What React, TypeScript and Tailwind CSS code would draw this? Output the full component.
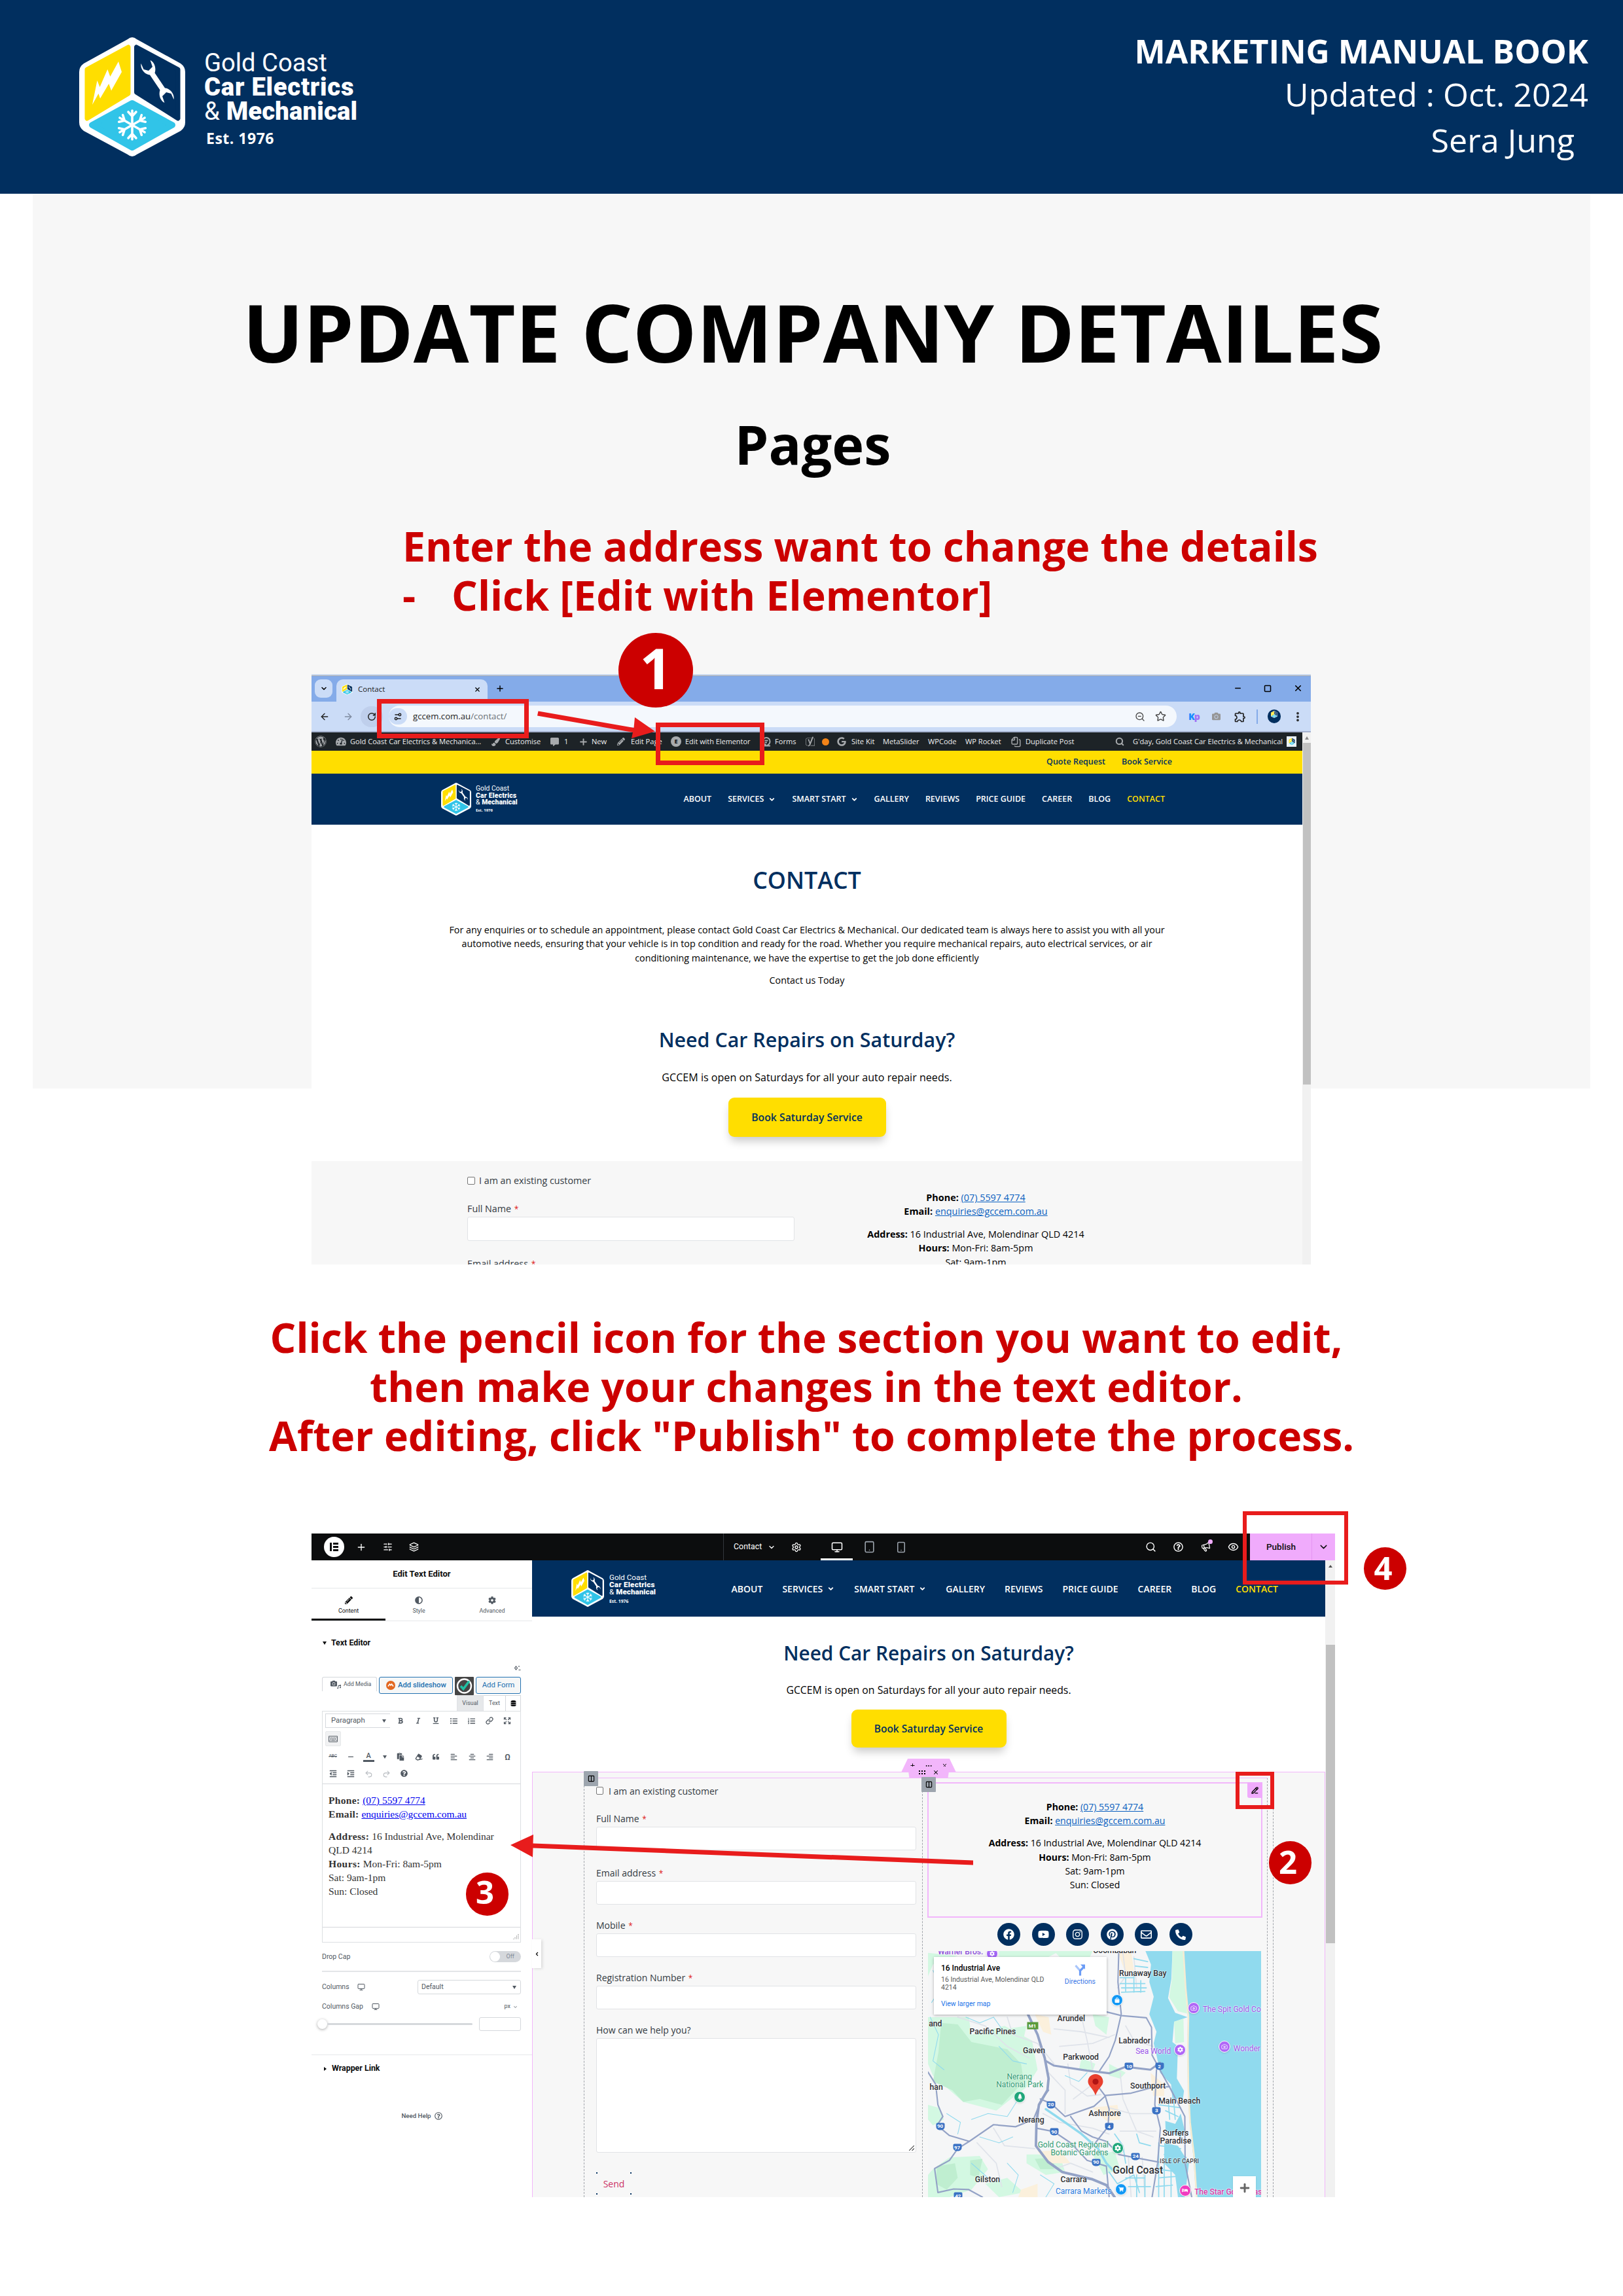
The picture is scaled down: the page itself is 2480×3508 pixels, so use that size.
import type { CSSProperties, ReactNode } from "react";
import {
  ArrowLeft, ArrowRight, Camera, ChevronDown, ChevronLeft, Columns2, Ellipsis, EllipsisVertical, Expand,
  Eye, Files, Layers, Link, Megaphone, Minus, Monitor, PencilLine, Plus, Redo2, RotateCw, Search,
  Settings, Settings2, SlidersHorizontal, Smartphone, Square, Star, Tablet, Undo2, X, ZoomOut,
} from "lucide-react";
import {
  FaAdjust, FaAlignCenter, FaAlignLeft, FaAlignRight, FaBold, FaCamera, FaCog, FaCommentAlt, FaDatabase, FaEraser,
  FaFacebook, FaIndent, FaInstagram, FaItalic, FaListOl, FaListUl, FaMusic, FaOutdent, FaPaintBrush, FaPaste, FaPencilAlt,
  FaPhoneAlt, FaPinterest, FaQuestionCircle, FaQuoteLeft, FaRegEnvelope, FaRegKeyboard, FaRegQuestionCircle,
  FaShoppingCart, FaTachometerAlt, FaTree, FaUnderline, FaWordpress, FaYoast, FaYoutube, FaGoogle, FaBed, FaShoppingBag,
} from "react-icons/fa";
import { MdOutlineExtension } from "react-icons/md";

/* ---------- Brand ---------- */

function BrandMark({ className }: { className: string }) {
  return (
    <svg viewBox="121 57 162 182" preserveAspectRatio="none" className={className}>
      <path
        d="M195 60 Q202 54 209 60 L276 97 Q283 102 283 110 V187 Q283 195 276 200 L209 236 Q202 242 195 236 L128 200 Q121 195 121 187 V110 Q121 102 128 97Z"
        fill="#fff"
      />
      <path d="M196 72 V143 L133 181 V106Z" fill="#ffde00" stroke="#ffde00" strokeWidth="7" strokeLinejoin="round" />
      <path d="M208.500 72 V141 L272 181 V106Z" fill="#012f5f" stroke="#012f5f" strokeWidth="7" strokeLinejoin="round" />
      <path d="M202 157.500 L263.500 191 L202 225.500 L140.500 191Z" fill="#31c4e8" stroke="#31c4e8" strokeWidth="9" strokeLinejoin="round" />
      <path d="M181 94 L186 110 L170 138.500 L166.300 128 L153 150.500 L150.500 143 L141 160 L148.500 123 L152.500 133 L164.300 106 L168.400 117Z" fill="#fff" />
      <path
        d="M215.500 97 L219.500 106 L227 108 L233 102 L229.600 92 C236 95 239 104 236.500 111.500 L252 134.500 C259 135 267 143 265.500 152 L261.500 143 L254 141 L248 147 L251.400 157 C245 154 242 145 244.500 137.500 L229 114.500 C222 114 214 106 215.500 97Z"
        fill="#fff"
      />
      <g stroke="#fff" strokeWidth="3.600" strokeLinecap="round" fill="none">
        {[0, 60, 120, 180, 240, 300].map((a) => (
          <path key={a} d="M0 0 V-22 M-6 -20 L0 -13.500 L6 -20" transform={`translate(202 191) rotate(${a})`} />
        ))}
      </g>
    </svg>
  );
}

type LogoProps = { mark: string; wrap: string; line: string; est: string };

function Logo({ mark, wrap, line, est }: LogoProps) {
  return (
    <div className={`flex ${wrap}`}>
      <BrandMark className={mark} />
      <div className="whitespace-nowrap font-[Roboto,sans-serif] text-white">
        <div className={line}>Gold Coast</div>
        <div className={`${line} font-black tracking-[0.02em]`}>Car Electrics</div>
        <div className={`${line} tracking-[0.005em]`}>
          &amp; <span className="font-black">Mechanical</span>
        </div>
        <div className={`font-['Open_Sans',sans-serif] font-bold ${est}`}>Est. 1976</div>
      </div>
    </div>
  );
}

function Header() {
  return (
    <header className="flex h-[296px] justify-between bg-[#012f5f] text-white">
      <Logo
        wrap="ml-[121px] mt-[57px] gap-[29px]"
        mark="h-[182px] w-[162px]"
        line="h-[37px] translate-y-[21px] text-[38.2px] leading-[37px]"
        est="mt-[27px] pl-[3px] text-[23px] leading-[32px] tracking-[0.5px]"
      />
      <div className="mr-[53px] mt-[45px] text-right text-[50.2px] leading-[66px]">
        <div className="text-[50px] font-bold">MARKETING MANUAL BOOK</div>
        <div>Updated : Oct. 2024</div>
        <div className="mt-1 pr-[21px]">Sera Jung</div>
      </div>
    </header>
  );
}

/* ---------- Shared website parts ---------- */

const NAV = ["ABOUT", "SERVICES", "SMART START", "GALLERY", "REVIEWS", "PRICE GUIDE", "CAREER", "BLOG", "CONTACT"];

function SiteNav({ className }: { className: string }) {
  return (
    <nav className={`flex items-center whitespace-nowrap font-semibold text-white ${className}`}>
      {NAV.map((n) => (
        <span key={n} className={n === "CONTACT" ? "text-[#ffde00]" : "flex items-center gap-[7px]"}>
          {n}
          {(n === "SERVICES" || n === "SMART START") && <ChevronDown size={11} strokeWidth={4} />}
        </span>
      ))}
    </nav>
  );
}

function ContactDetails({ className }: { className: string }) {
  return (
    <div className={`whitespace-nowrap text-center text-black ${className}`}>
      <div><b>Phone:</b> <span className="text-[#0a5fc0] underline">(07) 5597 4774</span></div>
      <div><b>Email:</b> <span className="text-[#0a5fc0] underline">enquiries@gccem.com.au</span></div>
      <div className="mt-[13px]"><b>Address:</b> 16 Industrial Ave, Molendinar QLD 4214</div>
      <div><b>Hours:</b> Mon-Fri: 8am-5pm</div>
      <div>Sat: 9am-1pm</div>
      <div>Sun: Closed</div>
    </div>
  );
}

function Label({ children, required, className }: { children: ReactNode; required?: boolean; className: string }) {
  return (
    <div className={`h-5 leading-5 text-[#333a42] ${className}`}>
      {children} {required && <span className="ml-px text-[0.85em] text-[#d11]">*</span>}
    </div>
  );
}

function NumberDot({ n, className }: { n: number; className: string }) {
  return (
    <div className={`absolute flex justify-center rounded-full bg-[#cc0000] font-bold text-white ${className}`}>{n}</div>
  );
}

/* ---------- First window: browser ---------- */

function BrowserChrome() {
  return (
    <>
      <div className="h-[3px] border-b border-[#a3a8ad] bg-[#cbd9ee]" />
      <div className="flex h-[39px] items-end bg-[#84abe9]">
        <div className="mb-[6px] ml-[5px] flex h-7 w-[27px] items-center justify-center rounded-[9px] bg-[#cbdcf7]">
          <ChevronDown size={12} strokeWidth={3} />
        </div>
        <div className="ml-[6px] flex h-[34px] w-[231px] items-center rounded-t-[10px] bg-[#cbdcf7] pb-1 pl-2">
          <BrandMark className="h-[17px] w-[17px]" />
          <span className="ml-[8px] text-[11.5px] text-[#222]">Contact</span>
          <X size={11} strokeWidth={2.5} className="ml-auto mr-[10px]" />
        </div>
        <Plus size={14} strokeWidth={2.5} className="mb-[13px] ml-[12px]" />
        <div className="mb-[13px] ml-auto mr-[12px] flex items-center gap-[33px] text-black">
          <Minus size={13} strokeWidth={2.5} />
          <Square size={12} strokeWidth={3} />
          <X size={15} strokeWidth={2.5} />
        </div>
      </div>
      <div className="flex h-[47px] items-center border-b-2 border-[#a5b2cf] bg-[#cbdcf7] pl-[12px] text-[#1f1f1f]">
        <ArrowLeft size={16} />
        <ArrowRight size={16} className="ml-[20px] text-[#7e8aa0]" />
        <div className="ml-[11px] flex h-8 w-[34px] items-center justify-center rounded-full bg-[#bfcfec]">
          <RotateCw size={14} strokeWidth={2.5} />
        </div>
        <div className="ml-[9px] flex h-[33px] w-[1204px] items-center rounded-full bg-[#f4f8fd] pr-[16px]">
          <div className="flex h-[25px] w-[28px] items-center justify-center rounded-full bg-[#cbdcf7]">
            <Settings2 size={14} strokeWidth={2.5} className="-scale-y-100" />
          </div>
          <span className="ml-[9px] text-[13.2px]">
            gccem.com.au<span className="text-[#6b7075]">/contact/</span>
          </span>
          <ZoomOut size={16} className="ml-auto text-[#474747]" />
          <Star size={17} className="ml-[15px] text-[#474747]" />
        </div>
        <span className="ml-[18px] w-[36px] text-[14px] font-black tracking-[-1px] text-[#1a8cff]">
          K<span className="text-[#a070f5]">p</span>
        </span>
        <FaCamera size={13} className="text-[#969696]" />
        <MdOutlineExtension size={20} className="ml-[20px]" />
        <span className="ml-[15px] h-[22px] w-[2px] bg-[#84abe9]" />
        <div className="ml-[15px] flex h-[21px] w-[20px] items-start justify-center rounded-full bg-[#012f5f] pt-[2px]">
          <BrandMark className="h-[11px] w-[10px]" />
        </div>
        <EllipsisVertical size={18} strokeWidth={3} className="ml-[17px]" />
      </div>
    </>
  );
}

function AdminBar() {
  const icon = "text-[#a7aaad]";
  return (
    <div className="flex h-[28px] items-center whitespace-nowrap bg-[#1d2327] text-[11.1px] text-[#f0f0f1]">
      <span className="w-[37px] pl-[5px]"><FaWordpress size={18} className={icon} /></span>
      <span className="w-[22px]"><FaTachometerAlt size={16} className={icon} /></span>
      <span className="w-[216px]">Gold Coast Car Electrics &amp; Mechanica...</span>
      <span className="w-[21px]"><FaPaintBrush size={13} className={icon} /></span>
      <span className="w-[69px]">Customise</span>
      <span className="w-[21px]"><FaCommentAlt size={13} className={icon} /></span>
      <span className="w-[22px]">1</span>
      <span className="w-[20px]"><Plus size={15} strokeWidth={3} className={icon} /></span>
      <span className="w-[39px]">New</span>
      <span className="w-[21px]"><FaPencilAlt size={12} className={icon} /></span>
      <span className="w-[61px]">Edit Page</span>
      <span className="w-[22px]">
        <span className="flex h-[16px] w-[16px] items-center justify-center rounded-full bg-[#a7aaad] text-[9px] font-black text-[#1d2327]">E</span>
      </span>
      <span className="w-[117px] text-[10.9px]">Edit with Elementor</span>
      <span className="w-[20px]">
        <svg width="15" height="17" viewBox="0 0 15 17" fill="none" stroke="#a7aaad" strokeWidth="2">
          <path d="M4 14.500 H13 M7 13 A5.500 5.500 0 1 1 12.500 8 C12.500 11 10 13 8 14 M4.500 6.500 H9.500 M4.500 9.500 H8" />
        </svg>
      </span>
      <span className="w-[46px]">Forms</span>
      <span className="w-[26px]"><FaYoast size={16} className={icon} /></span>
      <span className="w-[23px]"><span className="block h-[11px] w-[11px] rounded-full bg-[#f18318]" /></span>
      <span className="w-[22px]"><FaGoogle size={14} className={icon} /></span>
      <span className="w-[48px]">Site Kit</span>
      <span className="w-[69px]">MetaSlider</span>
      <span className="w-[57px]">WPCode</span>
      <span className="w-[69px]">WP Rocket</span>
      <span className="w-[23px]"><Files size={17} className={`-scale-x-100 ${icon}`} /></span>
      <span className="w-[137px]">Duplicate Post</span>
      <span className="w-[27px]"><Search size={14} strokeWidth={3.5} className={icon} /></span>
      <span className="w-[235px]">G'day, Gold Coast Car Electrics &amp; Mechanical</span>
      <span className="flex h-[16px] w-[15px] items-center justify-center bg-[#e9f1f7]">
        <BrandMark className="h-[12px] w-[10px]" />
      </span>
    </div>
  );
}

function BrowserWindow() {
  return (
    <div className="relative ml-[476px] h-[902px] w-[1527px]">
      <div className="flex h-full flex-col overflow-hidden bg-white">
        <BrowserChrome />
        <div className="flex flex-1">
          <div className="w-[1514px]">
            <AdminBar />
            <div className="flex h-[35px] items-center justify-end gap-[25px] bg-[#ffde00] pr-[199px] text-[12.5px] font-semibold text-[#012f5f]">
              <span>Quote Request</span>
              <span>Book Service</span>
            </div>
            <div className="flex h-[78px] items-center justify-between bg-[#012f5f] pl-[198px] pr-[210px]">
              <Logo
                wrap="gap-[7px]"
                mark="h-[50px] w-[46px]"
                line="h-[10.5px] translate-y-[4px] text-[10.4px] leading-[10.5px]"
                est="mt-[6px] text-[6px] leading-[9px]"
              />
              <SiteNav className="gap-[25px] text-[12.5px]" />
            </div>
            <div className="flex h-[514px] flex-col items-center whitespace-nowrap pt-[59px] text-center text-[14.32px] leading-[21.45px] text-black">
              <h3 className="text-[35.8px] font-semibold leading-[50px] text-[#012f5f]">CONTACT</h3>
              <p className="mt-[41px]">
                For any enquiries or to schedule an appointment, please contact Gold Coast Car Electrics &amp; Mechanical. Our dedicated team is always here to assist you with all your
                <br />
                automotive needs, ensuring that your vehicle is in top condition and ready for the road. Whether you require mechanical repairs, auto electrical services, or air
                <br />
                conditioning maintenance, we have the expertise to get the job done efficiently
              </p>
              <p className="mt-[13px]">Contact us Today</p>
              <h3 className="mt-[59px] text-[30.4px] font-semibold leading-[42px] text-[#012f5f]">Need Car Repairs on Saturday?</h3>
              <p className="mt-[25px] text-[16.1px] leading-[22px]">GCCEM is open on Saturdays for all your auto repair needs.</p>
              <div className="mt-[20px] h-[60px] w-[241px] rounded-[9px] bg-[#ffde00] text-[15.8px] font-semibold leading-[60px] text-[#012f5f] shadow-[0_9px_14px_-3px_rgba(0,0,0,0.22)]">
                Book Saturday Service
              </div>
            </div>
            <div className="flex h-[158px] overflow-hidden bg-[#f7f7f7] text-[14.3px]">
              <div className="ml-[238px] w-[500px] pt-[20px]">
                <div className="flex h-5 items-center gap-[6px] text-[#333a42]">
                  <span className="h-[12px] w-[12px] rounded-[2px] border border-[#767676] bg-white" />
                  I am an existing customer
                </div>
                <Label required className="mt-[23px]">Full Name</Label>
                <div className="mt-[2px] h-[37px] rounded-[3px] border border-[#e1e3e6] bg-white" />
                <Label required className="mt-[25px]">Email address</Label>
              </div>
              <ContactDetails className="ml-[27px] w-[500px] pt-[45px] text-[14.4px] leading-[21.4px]" />
            </div>
          </div>
          <div className="flex w-[13px] flex-col items-center bg-[#f1f1f1]">
            <span className="mt-[6px] h-0 w-0 border-x-[3px] border-b-[5px] border-x-transparent border-b-[#8b8b8b]" />
            <span className="mt-[5px] h-[522px] w-[12px] bg-[#c1c1c1]" />
          </div>
        </div>
      </div>
      <div className="absolute left-[100px] top-[38px] h-[60px] w-[232px] border-[7px] border-[#e81c1c]" />
      <div className="absolute left-[526px] top-[74px] h-[65px] w-[166px] border-[7px] border-[#e81c1c]" />
      <svg className="absolute left-[340px] top-[50px]" width="190" height="60" viewBox="340 50 190 60" fill="#e81c1c">
        <path d="M346.500 56.500 L345 63.500 L491 89 L489 98 L525 87.500 L494 66 L492.500 82 Z" />
      </svg>
      <NumberDot n={1} className="left-[469px] top-[-63px] h-[114px] w-[114px] text-[86px] leading-[106px]" />
    </div>
  );
}

/* ---------- Second window: page editor ---------- */

function EditorTopBar() {
  return (
    <div className="flex h-[41px] items-center bg-[#0c0d0e] text-white">
      <span className="ml-[19px] flex h-[31px] w-[31px] items-center justify-center gap-[2px] rounded-full bg-white">
        <span className="h-[13px] w-[3px] bg-[#0c0d0e]" />
        <span className="flex h-[13px] flex-col justify-between">
          <span className="h-[3px] w-[8px] bg-[#0c0d0e]" />
          <span className="h-[3px] w-[8px] bg-[#0c0d0e]" />
          <span className="h-[3px] w-[8px] bg-[#0c0d0e]" />
        </span>
      </span>
      <Plus size={16} strokeWidth={2} className="ml-[18px]" />
      <SlidersHorizontal size={15} className="ml-[25px]" />
      <Layers size={15} className="ml-[25px]" />
      <span className="ml-[465px] h-full w-px bg-[#33373d]" />
      <span className="ml-[15px] w-[52px] font-[Roboto,sans-serif] text-[12.4px]">Contact</span>
      <ChevronDown size={12} strokeWidth={2.5} />
      <Settings size={16} className="ml-[24px]" />
      <span className="ml-[29px] flex h-full w-[49px] items-center justify-center border-b-[3px] border-white pt-[3px]">
        <Monitor size={18} />
      </span>
      <Tablet size={19} className="ml-[16px] text-[#9da5ae]" />
      <Smartphone size={18} className="ml-[30px] text-[#9da5ae]" />
      <Search size={17} className="ml-auto" />
      <FaRegQuestionCircle size={15} className="ml-[26px]" />
      <span className="relative ml-[27px]">
        <Megaphone size={15} className="-rotate-12" />
        <span className="absolute -right-[3px] -top-[4px] h-[7px] w-[7px] rounded-full bg-[#f0abfc]" />
      </span>
      <Eye size={17} className="ml-[26px] mr-[17px]" />
      <span className="flex h-full w-[95px] items-center border-r border-[#e595f2] bg-[#f0abfc] pl-[25px] font-[Roboto,sans-serif] text-[13.5px] font-medium text-[#0c0d0e]">
        Publish
      </span>
      <span className="flex h-full w-[35px] items-center justify-center bg-[#f0abfc] text-[#0c0d0e]">
        <ChevronDown size={17} />
      </span>
    </div>
  );
}

function Tool({ children, className }: { children: ReactNode; className?: string }) {
  return <span className={`flex w-[27.3px] justify-center ${className ?? ""}`}>{children}</span>;
}

function Caret({ className }: { className?: string }) {
  return <span className={`h-0 w-0 border-x-[3.5px] border-t-[5px] border-x-transparent border-t-current ${className ?? ""}`} />;
}

function EditorPanel() {
  return (
    <aside className="flex w-[337px] flex-col font-[Roboto,sans-serif] text-[#515962]">
      <div className="flex h-[43px] items-center justify-center border-b border-[#e6e8ea] text-[13px] font-bold text-[#0c0d0e]">Edit Text Editor</div>
      <div className="flex h-[50px] border-b border-[#e6e8ea] text-[8.9px]">
        <div className="flex w-[113px] flex-col items-center gap-[4px] border-b-[3px] border-[#0c0d0e] pt-[12px] text-[#0c0d0e]">
          <FaPencilAlt size={12} />
          Content
        </div>
        <div className="flex w-[102px] flex-col items-center gap-[4px] pt-[12px]">
          <FaAdjust size={12} />
          Style
        </div>
        <div className="flex w-[122px] flex-col items-center gap-[4px] pt-[12px]">
          <FaCog size={12} />
          Advanced
        </div>
      </div>
      <div className="flex h-[67px] items-center gap-[7px] pl-[17px] text-[12.4px] font-bold text-[#0c0d0e]">
        <Caret />
        Text Editor
      </div>
      <div className="mx-4 flex h-[18px] items-start justify-end pr-px">
        <svg width="10" height="9" viewBox="0 0 10 9" fill="none" stroke="#515962" strokeWidth="1.200">
          <path d="M2.500 2 L4.500 4.500 L2.500 7 L.6 4.500Z M7 1 V3 M6.500 7.500 H9.500" />
        </svg>
      </div>
      <div className="ml-4 mr-[17px] flex h-[28px] items-start justify-between whitespace-nowrap">
        <div className="flex h-[22px] w-[84px] items-center rounded-t-[3px] border border-b-0 border-[#d5d8dc] pl-[12px] text-[8.9px]">
          <FaCamera size={10} className="mb-[3px]" />
          <FaMusic size={6} className="mr-[4px] mt-[6px]" />
          Add Media
        </div>
        <div className="flex h-[26px] w-[113px] items-center gap-[4px] rounded-[3px] border border-[#2271b1] bg-[#f6f7f7] pl-[10px] text-[11.3px] font-medium text-[#2271b1]">
          <svg width="14" height="14" viewBox="0 0 14 14">
            <circle cx="7" cy="7" r="7" fill="#e36822" />
            <path d="M3 8.500 L5.500 5 L7 7 L8.500 5 L11 8.500" fill="none" stroke="#fff" strokeWidth="1.600" />
          </svg>
          Add slideshow
        </div>
        <svg width="29" height="28" viewBox="0 0 29 28" fill="none">
          <rect width="29" height="28" rx="1" fill="#464646" />
          <circle cx="14.500" cy="14" r="10.500" stroke="#fff" strokeWidth="2.400" />
          <path d="M9 14 L13 18.500 L22 6.500" stroke="#1fc1a4" strokeWidth="3.600" />
        </svg>
        <div className="flex h-[26px] w-[69px] items-center justify-center rounded-[3px] border border-[#2271b1] bg-[#f6f7f7] text-[11.4px] text-[#2271b1]">Add Form</div>
      </div>
      <div className="mr-[17px] flex h-[24px] justify-end text-[8.9px]">
        <span className="flex w-[41px] items-center justify-center border border-b-0 border-[#e0e2e6] bg-[#e6e8ea]">Visual</span>
        <span className="flex w-[33px] items-center justify-center border-t border-[#d5d8dc]">Text</span>
        <span className="flex w-[24px] items-center justify-center border border-b-0 border-[#d5d8dc] text-[#0c0d0e]">
          <FaDatabase size={9} />
        </span>
      </div>
      <div className="ml-4 mr-[17px] h-[354px] border border-[#dcdfe2]">
        <div className="flex h-[28px] items-center pl-[4px]">
          <span className="mr-[2px] flex h-[22px] w-[99px] items-center justify-between border border-r-0 border-[#d5d8dc] pl-[8px] pr-[6px] text-[11.3px]">
            Paragraph
            <Caret />
          </span>
          <Tool><FaBold size={10} /></Tool>
          <Tool><FaItalic size={10} /></Tool>
          <Tool><FaUnderline size={10} /></Tool>
          <Tool><FaListUl size={11} /></Tool>
          <Tool><FaListOl size={11} /></Tool>
          <Tool><Link size={12} strokeWidth={2.5} /></Tool>
          <Tool><Expand size={12} strokeWidth={2.5} /></Tool>
        </div>
        <div className="flex h-[27px] items-start pl-[4px] pt-[2px]">
          <span className="flex h-[23px] w-[24px] items-center justify-center rounded-[2px] border border-[#e6e8ea] bg-[#f1f2f3]">
            <FaRegKeyboard size={14} />
          </span>
        </div>
        <div className="flex h-[28px] items-center pl-[2px]">
          <Tool className="text-[6.500px] line-through">ABC</Tool>
          <Tool><Minus size={12} strokeWidth={2.5} /></Tool>
          <Tool>
            <span className="flex w-[17px] justify-center border-b-[3px] border-[#515962] text-[11px] font-medium leading-[13px]">A</span>
          </Tool>
          <Tool className="-mx-[3px]"><Caret /></Tool>
          <Tool><FaPaste size={12} /></Tool>
          <Tool><FaEraser size={11} className="-rotate-12" /></Tool>
          <Tool><FaQuoteLeft size={10} /></Tool>
          <Tool><FaAlignLeft size={11} /></Tool>
          <Tool><FaAlignCenter size={11} /></Tool>
          <Tool><FaAlignRight size={11} /></Tool>
          <Tool className="text-[13px] font-medium leading-[13px]">Ω</Tool>
        </div>
        <div className="flex h-[28px] items-start border-b border-[#d5d8dc] pl-[2px] pt-[6px]">
          <Tool><FaOutdent size={12} /></Tool>
          <Tool><FaIndent size={12} /></Tool>
          <Tool><Undo2 size={13} className="text-[#b8bcc1]" /></Tool>
          <Tool><Redo2 size={13} className="text-[#b8bcc1]" /></Tool>
          <Tool><FaQuestionCircle size={11} /></Tool>
        </div>
        <div className="h-[219px] border-b border-[#d5d8dc] pl-[9px] pt-[14px] font-['Liberation_Serif',serif] text-[15.5px] leading-[21px] text-[#333]">
          <div><b className="tracking-[0.3px]">Phone:</b> <span className="text-[#0000ee] underline">(07) 5597 4774</span></div>
          <div><b className="tracking-[0.3px]">Email:</b> <span className="text-[#0000ee] underline">enquiries@gccem.com.au</span></div>
          <div className="mt-[13px]"><b className="tracking-[0.4px]">Address:</b> 16 Industrial Ave, Molendinar</div>
          <div>QLD 4214</div>
          <div><b className="tracking-[0.4px]">Hours:</b> Mon-Fri: 8am-5pm</div>
          <div>Sat: 9am-1pm</div>
          <div>Sun: Closed</div>
        </div>
        <svg width="9" height="8" viewBox="0 0 9 8" className="ml-auto mr-[2px] mt-[10px]" stroke="#888" strokeDasharray="1.500 1">
          <path d="M8 0 V8 M5.500 2.500 V8 M3 5 V8 M.8 7 V8" />
        </svg>
      </div>
      <div className="ml-4 mr-[17px] flex h-[45px] items-center justify-between border-b-2 border-[#e3e5e8] text-[10.5px]">
        Drop Cap
        <span className="flex h-[17px] w-[48px] items-center justify-between rounded-full bg-[#d5d8dc] px-px pr-[10px] text-[9px] text-[#818a96]">
          <span className="h-[15px] w-[15px] rounded-full bg-white" />
          Off
        </span>
      </div>
      <div className="ml-4 mr-[17px] flex h-[46px] items-center text-[10.5px]">
        <span className="w-[54px]">Columns</span>
        <Monitor size={12} />
        <span className="ml-auto flex h-[22px] w-[158px] items-center justify-between rounded-[3px] border border-[#d5d8dc] pl-[5px] pr-[6px]">
          Default
          <Caret />
        </span>
      </div>
      <div className="ml-4 mr-[17px] flex h-[14px] items-center text-[10.5px]">
        <span className="w-[76px]">Columns Gap</span>
        <Monitor size={12} />
        <span className="ml-auto mr-[5px] flex items-center gap-1 text-[9px]">
          px <ChevronDown size={7} strokeWidth={3} />
        </span>
      </div>
      <div className="ml-[9px] mr-[17px] flex h-[38px] items-center">
        <span className="h-[15px] w-[15px] rounded-full bg-white shadow-[0_1px_4px_rgba(0,0,0,0.35)]" />
        <span className="h-[3px] w-[222px] rounded-r bg-[#d5d8dc]" />
        <span className="ml-auto h-[21px] w-[64px] rounded-[3px] border border-[#d5d8dc]" />
      </div>
      <div className="mt-[28px] flex h-[42px] items-center gap-[8px] border-t border-[#e6e8ea] pl-[19px] text-[12.4px] font-bold text-[#0c0d0e]">
        <span className="h-0 w-0 border-y-[3.5px] border-l-[4.5px] border-y-transparent border-l-current" />
        Wrapper Link
      </div>
      <div className="mt-[45px] flex items-center justify-center gap-[5px] text-[9.7px] font-medium">
        Need Help <FaRegQuestionCircle size={12} />
      </div>
    </aside>
  );
}

/* Map positions are in a 1210 x 842 drawing space whose origin is (42, 674). */
const at = (x: number, y: number): CSSProperties => ({ left: (x - 42) / 2.376, top: (y - 674) / 2.24 });

const PLACES: [string, number, number][] = [
  ["Runaway Bay", 822, 750], ["Arundel", 562, 905], ["Pacific Pines", 277, 950], ["Labrador", 792, 981], ["Gaven", 427, 1015],
  ["Parkwood", 597, 1036], ["Southport", 841, 1136], ["Main Beach", 955, 1186], ["Ashmore", 684, 1230], ["Nerang", 417, 1251],
  ["Surfers", 941, 1296], ["Paradise", 941, 1323], ["Gilston", 258, 1455], ["Carrara", 571, 1455], ["and", 69, 923], ["han", 72, 1140],
  ["Coombabah", 720, 671],
];

const SHIELDS: [string, number, number][] = [
  ["10", 772, 1069], ["2", 882, 1069], ["20", 488, 1200], ["3", 872, 1220], ["4", 699, 1275], ["90", 86, 1274], ["90", 500, 1293],
  ["97", 148, 1346], ["90", 652, 1397], ["24", 796, 1377], ["42", 151, 1512],
];

const POIS: { x: number; y: number; color: string; icon: ReactNode }[] = [
  { x: 276, y: 684, color: "bg-[#a264f5]", icon: <FaCog size={8} /> },
  { x: 729, y: 841, color: "bg-[#1198f5]", icon: <FaShoppingBag size={8} /> },
  { x: 1007, y: 869, color: "bg-[#b067f7]", icon: <Camera size={10} /> },
  { x: 957, y: 1012, color: "bg-[#b067f7]", icon: <FaCog size={9} /> },
  { x: 1118, y: 1002, color: "bg-[#b067f7]", icon: <Camera size={10} /> },
  { x: 375, y: 1173, color: "bg-[#1fa67a]", icon: <FaTree size={9} /> },
  { x: 731, y: 1348, color: "bg-[#1fa67a]", icon: <FaCog size={10} /> },
  { x: 743, y: 1490, color: "bg-[#1198f5]", icon: <FaShoppingCart size={8} /> },
  { x: 975, y: 1493, color: "bg-[#f03dc0]", icon: <FaBed size={9} /> },
];

const CAPTIONS: { text: string; x: number; y: number; cls: string }[] = [
  { text: "Warner Bros.", x: 160, y: 676, cls: "font-medium text-[#8a4fd8]" },
  { text: "The Spit Gold Coast", x: 1146, y: 873, cls: "w-[90px] text-[#9a54e8]" },
  { text: "Sea World", x: 860, y: 1016, cls: "text-[#9a54e8]" },
  { text: "Wonder", x: 1200, y: 1007, cls: "text-[#9a54e8]" },
  { text: "Nerang", x: 374, y: 1103, cls: "text-[#2f9a72]" },
  { text: "National Park", x: 375, y: 1130, cls: "text-[#2f9a72]" },
  { text: "Gold Coast Regional", x: 569, y: 1338, cls: "text-[#2f9a72]" },
  { text: "Botanic Gardens", x: 592, y: 1365, cls: "text-[#2f9a72]" },
  { text: "Carrara Markets", x: 607, y: 1495, cls: "text-[#2b7de0]" },
  { text: "The Star Gold Coas", x: 1132, y: 1498, cls: "font-medium text-[#d838a8]" },
];

function MapWidget() {
  return (
    <div className="relative ml-[8px] h-[376px] w-[509px] overflow-hidden bg-[#f5f6f7] font-[Roboto,sans-serif]">
      <svg viewBox="42 674 1210 842" preserveAspectRatio="none" className="h-full w-full" fill="none" strokeLinejoin="round" strokeLinecap="round">
        <g fill="#d3f8e2">
          <path d="M42 900 H190 L200 960 L320 930 L420 980 L440 1080 L400 1140 L330 1190 L290 1220 L170 1190 L60 1100 L42 1060Z" />
          <path d="M42 680 L150 690 L60 720 L42 760Z M300 674 H520 L480 694 H300Z M500 674 L640 674 L630 694 H520Z" />
          <path d="M60 1420 L120 1380 L230 1375 L260 1420 L200 1490 L120 1516 H42 V1440Z M42 1200 L80 1210 L100 1250 L60 1270 L42 1250Z" />
          <path d="M400 1370 L520 1370 L540 1430 L470 1440 L400 1400Z M640 1370 L720 1360 L740 1420 L680 1440Z M250 1470 L330 1450 L390 1500 L300 1516Z" />
          <path d="M700 1060 L760 1090 L740 1110 L700 1100Z M640 890 L700 900 L690 960 L650 930Z M330 940 L400 930 L380 1010 L320 990Z M600 1040 L650 1060 L640 1085 L590 1080Z" />
        </g>
        <g fill="#bfeed0">
          <path d="M90 920 L150 925 L200 985 L330 1010 L380 1060 L390 1120 L310 1200 L230 1180 L170 1190 L130 1150 L60 1120 L80 1020Z" />
          <path d="M75 1410 L140 1400 L150 1450 L110 1490 L70 1470Z M195 1390 L240 1385 L225 1450 L195 1440Z M430 1385 L500 1380 L500 1420 L450 1420Z" />
        </g>
        <g fill="#fbf0dc">
          <path d="M590 694 L640 700 L660 780 L690 800 V840 L640 860Z M730 674 H780 L790 740 L760 750Z M430 890 L480 900 L490 960 L460 950Z" />
          <path d="M850 1090 L900 1130 L900 1170 L860 1170Z M640 1210 L730 1200 L740 1250 L690 1255Z M440 1360 L520 1355 L560 1400 L480 1400Z M380 1490 L440 1470 L440 1516 H370Z" />
        </g>
        <g stroke="#dfe3ea" strokeWidth="4">
          <path d="M150 900 L250 930 L330 1000 L410 1040 M330 900 L350 960 L440 990 L500 1060 M500 940 L600 950 L700 970 M520 1000 L640 990 L720 960" />
          <path d="M550 1060 L560 1130 L620 1170 L670 1165 M600 900 L620 980 L640 1080 M740 1090 L750 1180 L800 1290 L860 1310 M700 1210 L780 1230 L870 1230" />
          <path d="M280 1280 L320 1340 L430 1350 M220 1330 L290 1400 L310 1480 M460 1230 L520 1260 L640 1280 L700 1300 M500 1420 L560 1400 L640 1430 M760 930 L790 980 L860 1000" />
          <path d="M750 680 L760 760 L730 800 M790 694 L800 800 M770 1380 L780 1516 M820 1380 L830 1516 M480 1090 L540 1150 L540 1230 M570 1180 L640 1130 M740 1290 L870 1290" />
        </g>
        <g fill="#90daee">
          <path d="M968 674 L976 800 L986 900 L984 1000 L986 1150 L992 1260 L1005 1370 L1016 1516 H1252 V674Z" />
          <path d="M832 674 H930 L926 770 L914 835 L940 885 L985 900 L936 916 L930 985 L950 1000 L946 1110 L972 1152 L968 1180 L930 1180 L925 1130 L885 1090 L872 1030 L862 990 L872 950 L846 890 L862 830 L846 780 L852 720Z" />
          <path d="M904 1255 L940 1265 L960 1230 L975 1290 L960 1310 L905 1290Z M900 1330 L950 1340 L990 1400 L975 1516 H950 L940 1440 L900 1400Z" />
        </g>
        <path d="M930 674 L968 674 L976 800 L983 888 L950 880 L918 832 L928 770Z M936 916 L970 905 L972 985 L940 990Z" fill="#d3f8e2" />
        <path d="M970 674 L978 800 L988 900 L986 1000 L988 1150 L994 1260 L1008 1370 L1018 1516" stroke="#f6ecd2" strokeWidth="6" />
        <g stroke="#90daee" strokeWidth="4">
          <path d="M740 765 H790 V745 M740 785 H830 M745 800 H835 M760 765 V815 M790 765 V815 M815 775 V815 M790 700 L840 710 M795 725 L840 730 M745 815 L830 812" />
          <path d="M880 1200 L960 1210 M905 1220 L950 1240 M915 1190 L920 1250 M935 1190 L940 1250 M885 1340 L960 1350 M900 1370 L980 1380 M870 1420 L960 1430 M880 1450 L940 1445 M870 1480 L930 1475 M900 1400 V1516 M925 1400 V1516 M880 1330 V1516" />
          <path d="M700 1430 L730 1470 L790 1440 L810 1500 M760 1450 H830 M770 1480 H850 M800 1440 V1516 M830 1440 V1516 M850 1340 L810 1330 L800 1300 M720 1300 L750 1340 L760 1400" />
          <path d="M470 1215 L540 1260 L600 1300 L660 1350 L690 1400 L720 1430" strokeWidth="8" />
        </g>
        <g stroke="#90daee" strokeWidth="2.500">
          <path d="M180 900 L230 920 L280 900 L310 940 M300 1000 L350 1050 L400 1060 M60 740 L90 800 L55 850 M50 900 L80 960 L60 1050 L100 1080 M200 1250 L260 1230 L330 1240 L370 1180" />
          <path d="M110 1230 L160 1260 L150 1300 M230 1310 L300 1330 L350 1310 M330 1400 L370 1440 L350 1500 M540 1100 L590 1120 L620 1090 M200 1400 L260 1450 M450 1440 L500 1470 L470 1516 M590 730 L560 800 L600 880" />
        </g>
        <g stroke="#93a2c6" strokeWidth="5">
          <path d="M400 880 L440 960 L466 1040 L480 1110 L476 1150 L445 1200 L436 1260 L434 1340 L478 1395 L530 1430 L640 1455 L690 1475 L720 1516" strokeWidth="9" />
          <path d="M470 1050 L500 1066 L620 1083 L700 1092 L760 1070 L850 1080 L885 1056" strokeWidth="7" />
          <path d="M735 674 L732 780 L744 890 L722 980 L700 1035 L662 1088 M690 882 L745 895 L835 902 L854 935 L856 1030 L890 1090 L920 1140 L975 1240 L976 1400 L1000 1516" />
          <path d="M662 1140 L686 1170 L700 1215 L696 1275 L650 1330 M686 1168 L780 1160 L860 1140 L920 1138 M686 1170 L645 1205 L540 1240 L490 1196 L450 1180" />
          <path d="M560 1240 L600 1290 L640 1310 L690 1325 L735 1370 L800 1382 L880 1396 M872 1080 L866 1200 L886 1280 L876 1400 L856 1516" />
          <path d="M42 1088 L70 1130 L78 1200 L96 1240 L75 1270 L120 1305 L192 1325 L280 1268 L360 1275 L425 1250 L455 1180 L480 1150" />
          <path d="M192 1325 L150 1350 L120 1390 L66 1418 L78 1500 L135 1488 L190 1490 L240 1516 M436 1280 L500 1292 L560 1330 L620 1390 L690 1410 L700 1516" />
        </g>
      </svg>
      {PLACES.map(([name, x, y]) => (
        <span key={name} style={at(x, y)} className="absolute -translate-x-1/2 -translate-y-1/2 whitespace-nowrap text-[12.200px] font-medium leading-none text-[#2d2f33] [text-shadow:0_0_2px_#fff,0_0_2px_#fff]">
          {name}
        </span>
      ))}
      <span style={at(804, 1426)} className="absolute -translate-x-1/2 -translate-y-1/2 whitespace-nowrap text-[15.600px] font-medium leading-none text-[#2d2f33] [text-shadow:0_0_2px_#fff,0_0_2px_#fff]">
        Gold Coast
      </span>
      <span style={at(955, 1394)} className="absolute -translate-x-1/2 -translate-y-1/2 whitespace-nowrap text-[8.500px] font-medium leading-none tracking-[0.3px] text-[#33363b] [text-shadow:0_0_2px_#fff,0_0_2px_#fff]">
        ISLE OF CAPRI
      </span>
      {CAPTIONS.map((c) => (
        <span key={c.text} style={at(c.x, c.y)} className={`absolute -translate-x-1/2 -translate-y-1/2 overflow-hidden whitespace-nowrap text-[12px] leading-[14px] [text-shadow:0_0_2px_#fff,0_0_2px_#fff] ${c.cls}`}>
          {c.text}
        </span>
      ))}
      {SHIELDS.map(([n, x, y]) => (
        <span key={`${n}-${x}`} style={at(x, y)} className="absolute flex h-[11px] w-[13px] -translate-x-1/2 -translate-y-1/2 items-center justify-center rounded-b-[5px] rounded-t-[2px] bg-[#3b72c4] text-[8px] font-bold text-white">
          {n}
        </span>
      ))}
      <span style={at(421, 930)} className="absolute flex h-[11px] w-[17px] -translate-x-1/2 -translate-y-1/2 items-center justify-center bg-[#5a9a3a] text-[8px] font-bold text-white">M1</span>
      {POIS.map((p) => (
        <span key={`${p.x}-${p.y}`} style={at(p.x, p.y)} className={`absolute flex h-[18px] w-[18px] -translate-x-1/2 -translate-y-1/2 items-center justify-center rounded-full border border-white text-white shadow-sm ${p.color}`}>
          {p.icon}
        </span>
      ))}
      <svg style={at(622, 1096)} className="absolute" width="24" height="33" viewBox="0 0 24 33">
        <path d="M12 0 C18.500 0 23.500 5 23.500 11.500 C23.500 18 16 21 12 32.500 C8 21 .5 18 .5 11.500 C.5 5 5.500 0 12 0Z" fill="#e8402f" />
        <circle cx="12" cy="11.500" r="4.600" fill="#b01414" />
      </svg>
      <div className="absolute left-[9px] top-[9px] flex h-[88px] w-[264px] justify-between bg-white pl-[11px] pr-[17px] pt-[9px] shadow-[0_1px_4px_rgba(0,0,0,0.3)]">
        <div className="text-[10.5px] leading-[12px] text-[#5b5b5b]">
          <div className="text-[12px] font-medium leading-[16px] text-black">16 Industrial Ave</div>
          <div className="mt-[4px] w-[165px]">16 Industrial Ave, Molendinar QLD 4214</div>
          <div className="mt-[13px] text-[#1a73e8]">View larger map</div>
        </div>
        <div className="flex flex-col items-center text-[10.5px] leading-[12px] text-[#3b78e7]">
          <svg width="17" height="18" viewBox="0 0 17 18" fill="none" stroke="#6b9cf6" strokeWidth="3.200" className="mb-[3px] mt-[2px]">
            <path d="M1.500 2 L8 9.500" stroke="#a9c6fb" />
            <path d="M8.500 17.500 V10 L14 4.500" />
            <path d="M9 .5 H16 V8Z" fill="#6b9cf6" stroke="none" />
          </svg>
          Directions
        </div>
      </div>
      <div className="absolute right-[8px] top-[344px] flex h-[35px] w-[35px] items-center justify-center bg-white text-[#666] shadow">
        <Plus size={20} strokeWidth={3.500} />
      </div>
    </div>
  );
}

function DragDots() {
  return (
    <span className="grid grid-cols-3 gap-[2px]">
      {[0, 1, 2, 3, 4, 5].map((i) => (
        <span key={i} className="h-[2px] w-[2px] bg-black" />
      ))}
    </span>
  );
}

function FormColumn() {
  const input = "mt-[2px] h-[36px] rounded-[3px] border border-[#e1e3e6] bg-white";
  const corner = "absolute h-[2px] w-[2px] bg-[#012f5f]";
  return (
    <div className="w-[517px] border-l border-dashed border-[#a0a4aa] pl-[18px] pr-[9px] pt-[18px] text-[14px]">
      <div className="flex h-5 items-center gap-[8px] text-[#333a42]">
        <span className="h-[12px] w-[11px] rounded-[2px] border border-[#767676] bg-white" />
        I am an existing customer
      </div>
      <Label required className="mt-[23px]">Full Name</Label>
      <div className={input} />
      <Label required className="mt-[25px]">Email address</Label>
      <div className={input} />
      <Label required className="mt-[22px]">Mobile</Label>
      <div className={input} />
      <Label required className="mt-[22px]">Registration Number</Label>
      <div className={input} />
      <Label className="mt-[22px]">How can we help you?</Label>
      <div className="mt-[2px] flex h-[175px] items-end justify-end rounded-[3px] border border-[#e1e3e6] bg-white p-[2px]">
        <svg width="8" height="8" viewBox="0 0 8 8" stroke="#444" strokeWidth="1.100">
          <path d="M0 8 L8 0 M4.500 8 L8 4.500" />
        </svg>
      </div>
      <div className="relative mt-[30px] flex h-[34px] w-[54px] items-center justify-center text-[#cc3366]">
        <span className={`${corner} left-0 top-0`} />
        <span className={`${corner} right-0 top-0`} />
        <span className={`${corner} bottom-0 left-0`} />
        <span className={`${corner} bottom-0 right-0`} />
        Send
      </div>
    </div>
  );
}

function ContactColumn() {
  const badge = "flex h-[35px] w-[35px] items-center justify-center rounded-full bg-[#012f5f]";
  return (
    <div className="mt-[8px] w-[528px] border border-b-0 border-dashed border-[#a0a4aa]">
      <div className="relative ml-[7px] mt-[6px] h-[207px] w-[512px] border-2 border-[#f2b6fb] pt-[25px]">
        <ContactDetails className="text-[14.1px] leading-[21.200px]" />
        <span className="absolute -right-[2px] -top-[2px] flex h-[24px] w-[23px] items-center justify-center rounded-bl-[3px] bg-[#f0abfc]">
          <PencilLine size={11} strokeWidth={3} />
        </span>
      </div>
      <div className="mt-[8px] flex justify-center gap-[17.600px] text-white">
        <span className={badge}><FaFacebook size={17} /></span>
        <span className={badge}><FaYoutube size={17} /></span>
        <span className={badge}><FaInstagram size={17} /></span>
        <span className={badge}><FaPinterest size={17} /></span>
        <span className={badge}><FaRegEnvelope size={17} /></span>
        <span className={badge}><FaPhoneAlt size={16} /></span>
      </div>
      <div className="mt-[8px]">
        <MapWidget />
      </div>
    </div>
  );
}

function Preview() {
  const handle = "absolute flex h-[23px] w-[22px] items-center justify-center rounded-[1px] bg-[#9da5ae]";
  return (
    <div className="flex flex-1">
      <div className="w-[1212px]">
        <div className="flex h-[86px] items-center justify-between bg-[#012f5f] pl-[60px] pr-[72px]">
          <Logo
            wrap="gap-[8px]"
            mark="h-[56px] w-[50px]"
            line="h-[11px] translate-y-[6px] text-[11.6px] leading-[11px]"
            est="mt-[9px] text-[6.8px] leading-[12px]"
          />
          <SiteNav className="gap-[30px] text-[14px]" />
        </div>
        <div className="flex h-[237px] flex-col items-center whitespace-nowrap pt-[35px] text-black">
          <h3 className="text-[29.8px] font-semibold leading-[42px] text-[#012f5f]">Need Car Repairs on Saturday?</h3>
          <p className="mt-[24px] text-[15.8px] leading-[22px]">GCCEM is open on Saturdays for all your auto repair needs.</p>
          <div className="mt-[19px] h-[58px] w-[237px] rounded-[9px] bg-[#ffde00] text-center text-[15.5px] font-semibold leading-[58px] text-[#012f5f] shadow-[0_9px_14px_-3px_rgba(0,0,0,0.22)]">
            Book Saturday Service
          </div>
        </div>
        <div className="relative flex h-[650px] border border-b-0 border-[#f2b6fb] bg-[#f7f7f7] pl-[78px]">
          <FormColumn />
          <ContactColumn />
          <div className="w-[9px] border-r border-dashed border-[#a0a4aa]" />
          <div className="absolute left-[100px] top-[8px] h-px w-[1023px] bg-[#f2b6fb]" />
          <div className="absolute left-[563px] top-[-21px] flex h-[21px] w-[84px] items-center justify-center gap-[14px] bg-[#f2b6fb] [clip-path:polygon(12%_0,88%_0,100%_100%,0_100%)]">
            <Plus size={9} strokeWidth={2.500} />
            <Ellipsis size={12} />
            <X size={9} strokeWidth={2.500} />
          </div>
          <div className="absolute left-[573px] top-[-9px] flex h-[18px] w-[64px] items-center justify-center gap-[11px] bg-[#f2b6fb] [clip-path:polygon(0_0,100%_0,96%_100%,4%_100%)]">
            <DragDots />
            <X size={10} strokeWidth={2.500} />
          </div>
          <span className={`${handle} left-[78px] top-[-2px]`}><Columns2 size={11} strokeWidth={2.500} /></span>
          <span className={`${handle} left-[594px] top-[7px]`}><Columns2 size={11} strokeWidth={2.500} /></span>
          <span className="absolute left-[-1px] top-[255px] flex h-[44px] w-[14px] items-center justify-center bg-white shadow-[2px_1px_4px_rgba(0,0,0,0.12)]">
            <ChevronLeft size={9} strokeWidth={3} />
          </span>
        </div>
      </div>
      <div className="flex w-[15px] flex-col items-center bg-[#f1f1f1]">
        <span className="mt-[7px] h-0 w-0 border-x-[3px] border-b-[4px] border-x-transparent border-b-[#505050]" />
        <span className="mt-[118px] h-[456px] w-[14px] bg-[#c1c1c1]" />
      </div>
    </div>
  );
}

function EditorWindow() {
  return (
    <div className="relative ml-[476px] mt-[113px] h-[1014px] w-[1564px]">
      <div className="flex h-full flex-col overflow-hidden bg-white">
        <EditorTopBar />
        <div className="flex flex-1">
          <EditorPanel />
          <Preview />
        </div>
      </div>
      <div className="absolute left-[1423px] top-[-34px] h-[112px] w-[161px] border-[6.500px] border-[#e81c1c]" />
      <div className="absolute left-[1412px] top-[364px] h-[57px] w-[59px] border-[6px] border-[#e81c1c]" />
      <svg className="absolute left-[300px] top-[450px]" width="720" height="60" viewBox="300 450 720 60" fill="#e81c1c">
        <path d="M304 476 L339 460 L338.500 473.500 L1011 499.500 V506.500 L338.500 480.500 L338 494.500Z" />
      </svg>
      <NumberDot n={2} className="left-[1463px] top-[470px] h-[66px] w-[65px] pr-[7px] text-[49px] leading-[62px]" />
      <NumberDot n={3} className="left-[236px] top-[518px] h-[66px] w-[65px] pr-[7px] text-[49px] leading-[59px]" />
      <NumberDot n={4} className="left-[1608px] top-[21px] h-[65px] w-[65px] pr-[6px] text-[49px] leading-[63px]" />
    </div>
  );
}

/* ---------- Page ---------- */

export default function App() {
  return (
    <div className="h-[3508px] w-[2480px] overflow-hidden bg-white font-['Open_Sans',sans-serif] text-black">
      <Header />
      <main className="bg-[linear-gradient(#f7f7f7,#f7f7f7)] bg-[length:2380px_1367px] bg-top bg-no-repeat pt-[131px]">
        <h1 className="pl-[4px] text-center text-[122.900px] font-bold leading-[160px]">UPDATE COMPANY DETAILES</h1>
        <h2 className="mt-[36px] pl-[4px] text-center text-[82.800px] font-bold leading-[110px]">Pages</h2>
        <div className="mb-[84px] mt-[63px] pl-[615px] text-[62.600px] font-bold leading-[75px] text-[#cc0000]">
          <p>Enter the address want to change the details</p>
          <p className="flex">
            <span className="w-[75px]">-</span>Click [Edit with Elementor]
          </p>
        </div>
        <BrowserWindow />
        <div className="mt-[73px] text-center text-[62.500px] font-bold leading-[75px] text-[#cc0000]">
          <p className="pr-[16px]">Click the pencil icon for the section you want to edit,</p>
          <p className="pr-[16px]">then make your changes in the text editor.</p>
          <p>After editing, click "Publish" to complete the process.</p>
        </div>
        <EditorWindow />
      </main>
    </div>
  );
}
